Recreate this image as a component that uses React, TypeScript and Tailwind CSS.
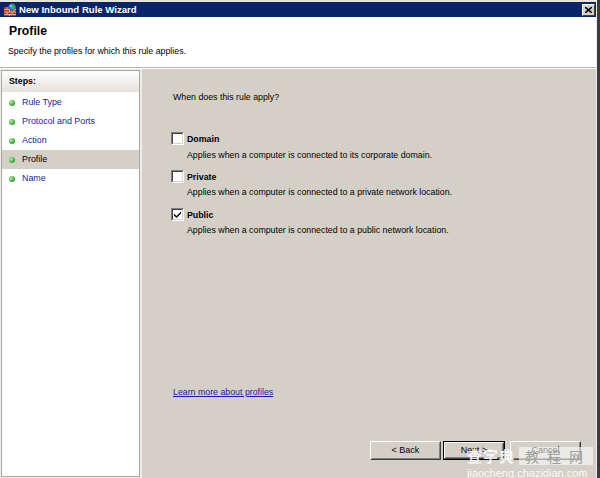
import { ReactNode } from "react";

type Step = { label: string; active?: boolean };

const steps: Step[] = [
  { label: "Rule Type" },
  { label: "Protocol and Ports" },
  { label: "Action" },
  { label: "Profile", active: true },
  { label: "Name" },
];

const profiles = [
  {
    name: "Domain",
    checked: false,
    desc: "Applies when a computer is connected to its corporate domain.",
  },
  {
    name: "Private",
    checked: false,
    desc: "Applies when a computer is connected to a private network location.",
  },
  {
    name: "Public",
    checked: true,
    desc: "Applies when a computer is connected to a public network location.",
  },
];

const FirewallIcon = () => (
  <svg width="14" height="14" viewBox="0 0 14 14">
    <rect x="1" y="4" width="12" height="9" fill="#a83a22" />
    <g stroke="#e8c8b0" strokeWidth="0.8">
      <line x1="1" y1="6.5" x2="13" y2="6.5" />
      <line x1="1" y1="9" x2="13" y2="9" />
      <line x1="1" y1="11.5" x2="13" y2="11.5" />
      <line x1="4" y1="4" x2="4" y2="6.5" />
      <line x1="9" y1="4" x2="9" y2="6.5" />
      <line x1="6.5" y1="6.5" x2="6.5" y2="9" />
      <line x1="11" y1="6.5" x2="11" y2="9" />
      <line x1="4" y1="9" x2="4" y2="11.5" />
      <line x1="9" y1="9" x2="9" y2="11.5" />
      <line x1="6.5" y1="11.5" x2="6.5" y2="13" />
    </g>
    <circle cx="9" cy="4" r="3.6" fill="#2f7fd8" />
    <path d="M7 2.2 Q8.5 3 8 4.6 Q9.5 5 10.5 6.6 Q12 5 11.8 3.2 Q10.5 2.6 10 1" fill="#3fae3a" />
    <circle cx="8" cy="3" r="1" fill="#bfe6ff" opacity="0.7" />
  </svg>
);

const Bullet = () => (
  <span className="block w-[6px] h-[6px] rounded-full bg-[radial-gradient(circle_at_35%_35%,#b8f0a0_0%,#3cb43c_55%,#1f7a1f_100%)]" />
);

const Checkbox = ({ checked }: { checked: boolean }) => (
  <span className="w-[13px] h-[13px] -ml-[2px] shrink-0 border border-t-[#808080] border-l-[#808080] border-r-white border-b-white flex">
    <span className="flex-1 bg-white border border-t-[#404040] border-l-[#404040] border-r-[#d4d0c8] border-b-[#d4d0c8] flex items-center justify-center">
      {checked ? (
        <svg width="7" height="7" viewBox="0 0 7 7">
          <path d="M0 2.5 L2.5 5 L7 0.5 L7 2.5 L2.5 7 L0 4.5 Z" fill="#000" />
        </svg>
      ) : null}
    </span>
  </span>
);

const Button = ({
  children,
  width,
  isDefault,
}: {
  children: ReactNode;
  width: string;
  isDefault?: boolean;
}) => (
  <div
    className={`${width} h-[19px] flex ${
      isDefault ? "border border-black" : ""
    }`}
  >
    <div className="flex-1 flex border border-t-white border-l-white border-r-[#404040] border-b-[#404040]">
      <div className="flex-1 flex items-center justify-center bg-[#d4d0c8] border border-t-[#d4d0c8] border-l-[#d4d0c8] border-r-[#808080] border-b-[#808080] text-[9px] leading-none">
        {children}
      </div>
    </div>
  </div>
);

export default function App() {
  return (
    <div className="w-[600px] h-[478px] flex bg-[#d4d0c8] text-black font-['Liberation_Sans',Arial,sans-serif] relative overflow-hidden">
      <div className="w-[596px] flex flex-col">
        <div className="h-[2px] bg-[#e6e4de]" />
        {/* title bar */}
        <div className="h-[15px] bg-[#0a246a] flex items-center pl-[3px] pr-[1px]">
          <FirewallIcon />
          <span className="ml-[2px] text-white font-bold text-[9.6px] leading-none">
            New Inbound Rule Wizard
          </span>
          <div className="ml-auto w-[13px] h-[12px] bg-[#d4d0c8] border border-t-white border-l-white border-r-[#404040] border-b-[#404040] flex items-center justify-center">
            <svg width="7" height="6" viewBox="0 0 7 6">
              <path d="M0 0 L7 6 M7 0 L0 6" stroke="#000" strokeWidth="1.6" />
            </svg>
          </div>
        </div>
        {/* header */}
        <div className="h-[50px] bg-white pl-[9px] pt-[7px] flex flex-col">
          <span className="text-[12.2px] font-bold leading-[14px]">Profile</span>
          <span className="mt-[7px] -ml-[1px] text-[8.8px] leading-[12px]">
            Specify the profiles for which this rule applies.
          </span>
        </div>
        <div className="h-px bg-[#b8b5ae]" />
        <div className="h-px bg-white" />
        {/* body */}
        <div className="flex-1 flex">
          <div className="w-[142px] flex pl-[1px] pt-[1px] pb-[1px] bg-[#eeede9]">
            <div className="w-[139px] border border-[#a9a7a2] bg-white flex flex-col">
              <div className="h-[21px] flex items-center pl-[7px] bg-[linear-gradient(to_bottom,#ffffff,#e6e1dc)] text-[8.8px] font-bold">
                Steps:
              </div>
              <div className="pt-px flex flex-col">
                {steps.map((step) => (
                  <div
                    key={step.label}
                    className={`h-[19px] flex items-center pl-[7px] ${
                      step.active ? "bg-[#d4d0c8]" : ""
                    }`}
                  >
                    <Bullet />
                    <span
                      className={`ml-[7px] text-[8.9px] leading-none ${
                        step.active ? "text-black" : "text-[#22229a]"
                      }`}
                    >
                      {step.label}
                    </span>
                  </div>
                ))}
              </div>
            </div>
          </div>
          <div className="flex-1 flex flex-col pl-[31px] pt-[22px] pr-[15px] pb-[18px]">
            <span className="text-[8.8px] leading-[12px]">When does this rule apply?</span>
            {profiles.map((p, i) => (
              <div
                key={p.name}
                className={`flex flex-col ${
                  i === 0 ? "mt-[29px]" : i === 1 ? "mt-[9px]" : "mt-[10px]"
                }`}
              >
                <div className="h-[13px] flex items-center">
                  <Checkbox checked={p.checked} />
                  <span className="ml-[3px] text-[8.8px] font-bold leading-[12px]">
                    {p.name}
                  </span>
                </div>
                <span
                  className={`pl-[14px] text-[8.8px] leading-[12px] ${
                    i === 0 ? "mt-[4px]" : "mt-[3px]"
                  }`}
                >
                  {p.desc}
                </span>
              </div>
            ))}
            <span className="mt-[150px] text-[8.8px] leading-[12px] text-[#1a1aa8] underline self-start">
              Learn more about profiles
            </span>
            <div className="flex-1" />
            <div className="flex justify-end items-end">
              <Button width="w-[71px]">&lt; Back</Button>
              <div className="w-[2px]" />
              <Button width="w-[62px]" isDefault>
                Next &gt;
              </Button>
              <div className="w-[5px]" />
              <Button width="w-[71px]">Cancel</Button>
            </div>
          </div>
        </div>
      </div>
      <div className="w-px bg-[#efefef]" />
      <div className="w-[3px] bg-[#3c3c3c]" />

      {/* watermark overlay */}
      <div className="absolute left-[467px] top-[447px] flex flex-col items-start pointer-events-none">
        <div className="flex items-center">
          <span className="text-[15px] leading-[18px] font-bold text-white/85 tracking-[1px] font-['Noto_Sans_CJK_SC',sans-serif]">
            查字典
          </span>
          <span className="ml-[4px] pl-[6px] pr-[2px] h-[18px] flex items-center bg-white/55 text-[#a0a0a0] text-[14px] tracking-[8px] font-['Noto_Sans_CJK_SC',sans-serif]">
            教程网
          </span>
        </div>
        <span className="mt-[2px] text-[11px] leading-[12px] text-white/90 font-['Liberation_Sans',Arial,sans-serif]">
          jiaocheng.chazidian.com
        </span>
      </div>
    </div>
  );
}
